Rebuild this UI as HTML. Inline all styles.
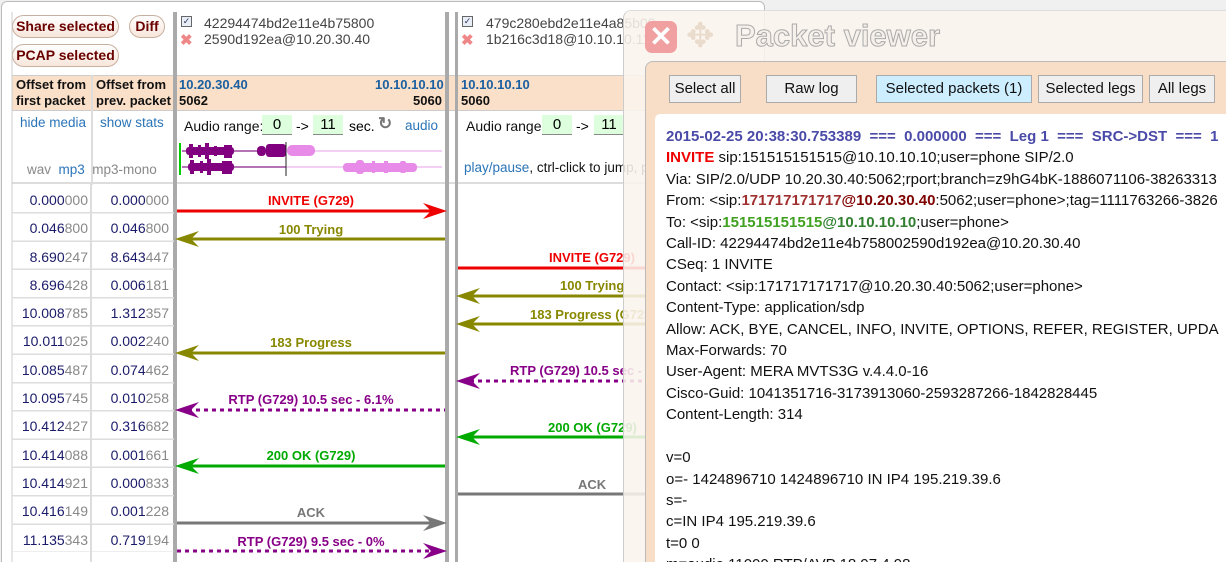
<!DOCTYPE html>
<html><head><meta charset="utf-8"><style>
*{margin:0;padding:0;box-sizing:border-box}
html{width:1226px;height:562px;overflow:hidden}
body{width:1226px;height:562px;overflow:hidden;background:#f0f0f0;font-family:"Liberation Sans",sans-serif;position:relative}
.a{position:absolute;white-space:nowrap}
.frame{left:1px;top:1px;width:764px;height:570px;background:#fff;border:1px solid #bbb;border-radius:6px}
.pill{position:absolute;white-space:nowrap;height:23px;border:1px solid #c8b0a0;border-radius:12px;background:linear-gradient(#fff,#f7e6da);color:#6a0000;font-weight:bold;font-size:14px;line-height:21px;text-align:center}
.hdr{background:#fae0c8}
.num{font-size:14px;color:#1a1a6a;text-align:right}
.num i{font-style:normal;color:#888}
.lbl{font-size:13px;font-weight:bold;text-align:center}
.btn{position:absolute;top:75px;height:28px;border:1px solid #aaa;background:#efefef;font-size:15px;line-height:26px;text-align:center;color:#111}
.pv{font-size:15px;color:#111;line-height:21.4px}
</style></head><body>
<div class="a frame"></div>
<div class="pill" style="left:12px;top:15px;width:107px">Share selected</div>
<div class="pill" style="left:129px;top:15px;width:36px">Diff</div>
<div class="pill" style="left:12px;top:44px;width:107px">PCAP selected</div>
<div class="a" style="left:181px;top:16px;width:11px;height:11px;border:1px solid #666;background:#e8eef8;font-size:9px;line-height:9px;color:#335;text-align:center">✓</div>
<div class="a" style="left:180px;top:34px;font-size:15px;color:#e88;font-weight:bold;line-height:14px">✖</div>
<div class="a" style="left:204px;top:15px;font-size:14px;color:#444;line-height:16px">42294474bd2e11e4b75800<br>2590d192ea@10.20.30.40</div>
<div class="a" style="left:462px;top:16px;width:11px;height:11px;border:1px solid #666;background:#e8eef8;font-size:9px;line-height:9px;color:#335;text-align:center">✓</div>
<div class="a" style="left:461px;top:34px;font-size:15px;color:#e88;font-weight:bold;line-height:14px">✖</div>
<div class="a" style="left:486px;top:15px;font-size:14px;color:#444;line-height:16px">479c280ebd2e11e4a85b00<br>1b216c3d18@10.10.10.11</div>
<div class="a hdr" style="left:12px;top:75px;width:700px;height:36px;border-top:1px solid #ccc;border-bottom:1px solid #ccc"></div>
<div class="a" style="left:91px;top:75px;width:2px;height:110px;background:#ddd"></div>
<div class="a" style="left:16px;top:77px;font-size:13px;font-weight:bold;line-height:16px;color:#111">Offset from<br>first packet</div>
<div class="a" style="left:96px;top:77px;font-size:13px;font-weight:bold;line-height:16px;color:#111">Offset from<br>prev. packet</div>
<div class="a" style="left:179px;top:77px;font-size:13px;font-weight:bold;line-height:16px;color:#1a5fa0">10.20.30.40</div>
<div class="a" style="left:375px;top:77px;font-size:13px;font-weight:bold;line-height:16px;color:#1a5fa0">10.10.10.10</div>
<div class="a" style="left:179px;top:93px;font-size:13px;font-weight:bold;color:#111">5062</div>
<div class="a" style="left:413px;top:93px;font-size:13px;font-weight:bold;color:#111">5060</div>
<div class="a" style="left:461px;top:77px;font-size:13px;font-weight:bold;color:#1a5fa0">10.10.10.10</div>
<div class="a" style="left:461px;top:93px;font-size:13px;font-weight:bold;color:#111">5060</div>
<div class="a" style="left:20px;top:115px;font-size:13.5px;color:#2a74b8">hide media</div>
<div class="a" style="left:100px;top:115px;font-size:13.5px;color:#2a74b8">show stats</div>
<div class="a" style="left:27px;top:162px;font-size:13.5px;color:#888">wav <span style="color:#2a74b8">&nbsp;mp3</span> &nbsp;mp3-mono</div>
<div class="a" style="left:184px;top:118px;font-size:14px;color:#111">Audio range:</div>
<div class="a" style="left:262px;top:115px;width:30px;height:20px;background:#dfd;border-bottom:1px solid #888;font-size:15px;text-align:center;line-height:20px">0</div>
<div class="a" style="left:296px;top:118px;font-size:14px">-&gt;</div>
<div class="a" style="left:313px;top:115px;width:30px;height:20px;background:#dfd;border-bottom:1px solid #888;font-size:15px;text-align:center;line-height:20px">11</div>
<div class="a" style="left:349px;top:118px;font-size:14px">sec.</div>
<div class="a" style="left:378px;top:114px;font-size:17px;color:#777;font-weight:bold">↻</div>
<div class="a" style="left:405px;top:118px;font-size:13.5px;color:#2a74b8">audio</div>
<div class="a" style="left:466px;top:118px;font-size:14px;color:#111">Audio range:</div>
<div class="a" style="left:542px;top:115px;width:30px;height:20px;background:#dfd;border-bottom:1px solid #888;font-size:15px;text-align:center;line-height:20px">0</div>
<div class="a" style="left:576px;top:118px;font-size:14px">-&gt;</div>
<div class="a" style="left:594px;top:115px;width:30px;height:20px;background:#dfd;border-bottom:1px solid #888;font-size:15px;text-align:center;line-height:20px">11</div>
<div class="a" style="left:464px;top:160px;font-size:13.5px;color:#111"><span style="color:#2a74b8">play/pause</span>, ctrl-click to jump, p</div>
<div class="a" style="left:12px;top:182px;width:700px;height:2px;background:#ddd"></div>
<svg class="a" style="left:0;top:0" width="765" height="562">
<rect x="179" y="143" width="2" height="32" fill="#0c0"/>
<line x1="182" y1="151" x2="442" y2="151" stroke="#f0c0f0" stroke-width="1.5"/>
<line x1="182" y1="167" x2="442" y2="167" stroke="#f0c0f0" stroke-width="1.5"/>
<line x1="182" y1="151" x2="286" y2="151" stroke="#a050a0" stroke-width="1.5"/>
<line x1="182" y1="167" x2="286" y2="167" stroke="#a050a0" stroke-width="1.5"/>
<g fill="#800080">
<rect x="186" y="147" width="48" height="8" rx="3"/><rect x="188" y="163" width="46" height="8" rx="3"/>
<rect x="189" y="144" width="4" height="14"/><rect x="198" y="145" width="3" height="12"/><rect x="205" y="143" width="4" height="16"/><rect x="214" y="146" width="3" height="10"/><rect x="224" y="145" width="8" height="13"/>
<rect x="190" y="160" width="4" height="14"/><rect x="200" y="161" width="3" height="12"/><rect x="207" y="159" width="4" height="16"/><rect x="222" y="161" width="10" height="13"/>
<rect x="257" y="146" width="9" height="10" rx="4"/><rect x="266" y="144" width="20" height="13" rx="3"/>
</g>
<g fill="#e88ae8">
<rect x="287" y="145" width="28" height="11" rx="5"/>
<rect x="343" y="163" width="74" height="9" rx="4"/>
<rect x="356" y="160" width="8" height="14" rx="3"/><rect x="372" y="161" width="3" height="12"/><rect x="384" y="161" width="4" height="12"/><rect x="400" y="161" width="6" height="12" rx="2"/>
</g>
<line x1="286" y1="142" x2="286" y2="176" stroke="#222" stroke-width="1"/>
<line x1="91" y1="184" x2="91" y2="562" stroke="#ddd" stroke-width="2"/>
<rect x="173" y="12" width="4" height="560" fill="#aaa"/>
<rect x="445" y="12" width="4" height="560" fill="#aaa"/>
<rect x="455" y="12" width="3" height="560" fill="#aaa"/>
<line x1="12" y1="12" x2="12" y2="562" stroke="#ccc"/>
<g stroke-width="3">
<line x1="177" y1="211" x2="440" y2="211" stroke="#e00"/>
<line x1="182" y1="239" x2="445" y2="239" stroke="#880"/>
<line x1="182" y1="353" x2="445" y2="353" stroke="#880"/>
<line x1="188" y1="410" x2="445" y2="410" stroke="#808" stroke-dasharray="4,4"/>
<line x1="182" y1="466" x2="445" y2="466" stroke="#0a0"/>
<line x1="177" y1="523" x2="440" y2="523" stroke="#777"/>
<line x1="177" y1="551" x2="432" y2="551" stroke="#808" stroke-dasharray="4,4"/>
<line x1="458" y1="268" x2="660" y2="268" stroke="#e00"/>
<line x1="462" y1="296" x2="660" y2="296" stroke="#880"/>
<line x1="462" y1="324" x2="660" y2="324" stroke="#880"/>
<line x1="470" y1="381" x2="660" y2="381" stroke="#808" stroke-dasharray="4,4"/>
<line x1="462" y1="437" x2="660" y2="437" stroke="#0a0"/>
<line x1="458" y1="494" x2="660" y2="494" stroke="#777"/>
</g>
<g>
<polygon points="447,211 423,203 431,211 423,219" fill="#e00"/>
<polygon points="175,239 199,231 191,239 199,247" fill="#880"/>
<polygon points="175,353 199,345 191,353 199,361" fill="#880"/>
<polygon points="175,410 199,402 191,410 199,418" fill="#808"/>
<polygon points="175,466 199,458 191,466 199,474" fill="#0a0"/>
<polygon points="447,523 423,515 431,523 423,531" fill="#777"/>
<polygon points="447,551 423,543 431,551 423,559" fill="#808"/>
<polygon points="456,296 480,288 472,296 480,304" fill="#880"/>
<polygon points="456,324 480,316 472,324 480,332" fill="#880"/>
<polygon points="456,381 480,373 472,381 480,389" fill="#808"/>
<polygon points="456,437 480,429 472,437 480,445" fill="#0a0"/>
</g>
</svg>
<div class="a" style="left:12px;top:212px;width:162px;height:340px;background:repeating-linear-gradient(#ddd 0 1.5px,transparent 1.5px 28.3px)"></div>
<div class="a lbl" style="left:178px;top:193px;width:266px;color:#e00">INVITE (G729)</div>
<div class="a lbl" style="left:178px;top:222px;width:266px;color:#880">100 Trying</div>
<div class="a lbl" style="left:178px;top:335px;width:266px;color:#880">183 Progress</div>
<div class="a lbl" style="left:178px;top:392px;width:266px;color:#808">RTP (G729) 10.5 sec - 6.1%</div>
<div class="a lbl" style="left:178px;top:448px;width:266px;color:#0a0">200 OK (G729)</div>
<div class="a lbl" style="left:178px;top:505px;width:266px;color:#777">ACK</div>
<div class="a lbl" style="left:178px;top:534px;width:266px;color:#808">RTP (G729) 9.5 sec - 0%</div>
<div class="a lbl" style="left:549px;top:250px;color:#e00">INVITE (G729)</div>
<div class="a lbl" style="left:560px;top:278px;color:#880">100 Trying</div>
<div class="a lbl" style="left:530px;top:307px;color:#880">183 Progress (G729)</div>
<div class="a lbl" style="left:510px;top:363px;color:#808">RTP (G729) 10.5 sec - 6.1%</div>
<div class="a lbl" style="left:548px;top:420px;color:#0a0">200 OK (G729)</div>
<div class="a lbl" style="left:578px;top:477px;color:#777">ACK</div>
<div class="a num" style="left:12px;top:186px;width:76px;line-height:28.3px">0.000<i>000</i><br>0.046<i>800</i><br>8.690<i>247</i><br>8.696<i>428</i><br>10.008<i>785</i><br>10.011<i>025</i><br>10.085<i>487</i><br>10.095<i>745</i><br>10.412<i>427</i><br>10.414<i>088</i><br>10.414<i>921</i><br>10.416<i>149</i><br>11.135<i>343</i></div>
<div class="a num" style="left:92px;top:186px;width:77px;line-height:28.3px">0.000<i>000</i><br>0.046<i>800</i><br>8.643<i>447</i><br>0.006<i>181</i><br>1.312<i>357</i><br>0.002<i>240</i><br>0.074<i>462</i><br>0.010<i>258</i><br>0.316<i>682</i><br>0.001<i>661</i><br>0.000<i>833</i><br>0.001<i>228</i><br>0.719<i>194</i></div>
<div class="a" style="left:623px;top:10px;width:620px;height:560px;background:rgba(250,244,238,0.88);border-left:1px solid #ccc;border-top:1px solid #ddd;border-radius:8px 0 0 0"></div>
<div class="a" style="left:645px;top:21px;width:32px;height:32px;border-radius:7px;background:#f0a0a0;color:#fff;font-size:28px;font-weight:bold;text-align:center;line-height:32px">✕</div>
<div class="a" style="left:686px;top:16px;font-size:34px;color:#eadccc;line-height:40px">✥</div>
<div class="a" style="left:735px;top:18px;font-size:31px;font-weight:bold;color:#f6f0ea;-webkit-text-stroke:1px #aaa;line-height:36px">Packet viewer</div>
<div class="a" style="left:645px;top:61px;width:600px;height:520px;background:#f8dec6;border:1px solid #bbb;border-radius:8px 0 0 0"></div>
<div class="btn" style="left:669px;width:72px">Select all</div>
<div class="btn" style="left:766px;width:91px">Raw log</div>
<div class="btn" style="left:876px;width:156px;background:#cdeeff">Selected packets (1)</div>
<div class="btn" style="left:1038px;width:105px">Selected legs</div>
<div class="btn" style="left:1149px;width:66px">All legs</div>
<div class="a" style="left:655px;top:114px;width:600px;height:460px;background:#fff;border-radius:5px"></div>
<div class="a pv" style="left:666px;top:126px">
<b style="color:#4a4aa8">2015-02-25 20:38:30.753389 &nbsp;=== &nbsp;0.000000 &nbsp;=== &nbsp;Leg 1 &nbsp;=== &nbsp;SRC-&gt;DST &nbsp;=== &nbsp;1</b><br>
<b style="color:#e00">INVITE</b> sip:151515151515@10.10.10.10;user=phone SIP/2.0<br>
Via: SIP/2.0/UDP 10.20.30.40:5062;rport;branch=z9hG4bK-1886071106-38263313<br>
From: &lt;sip:<b style="color:#a03030">171717171717</b><b style="color:#800000">@10.20.30.40</b>:5062;user=phone&gt;;tag=1111763266-3826<br>
To: &lt;sip:<b style="color:#40a020">151515151515</b><b style="color:#308030">@10.10.10.10</b>;user=phone&gt;<br>
Call-ID: 42294474bd2e11e4b758002590d192ea@10.20.30.40<br>
CSeq: 1 INVITE<br>
Contact: &lt;sip:171717171717@10.20.30.40:5062;user=phone&gt;<br>
Content-Type: application/sdp<br>
Allow: ACK, BYE, CANCEL, INFO, INVITE, OPTIONS, REFER, REGISTER, UPDA<br>
Max-Forwards: 70<br>
User-Agent: MERA MVTS3G v.4.4.0-16<br>
Cisco-Guid: 1041351716-3173913060-2593287266-1842828445<br>
Content-Length: 314<br>
<br>
v=0<br>
o=- 1424896710 1424896710 IN IP4 195.219.39.6<br>
s=-<br>
c=IN IP4 195.219.39.6<br>
t=0 0<br>
m=audio 11000 RTP/AVP 18 97 4 98
</div>
</body></html>
